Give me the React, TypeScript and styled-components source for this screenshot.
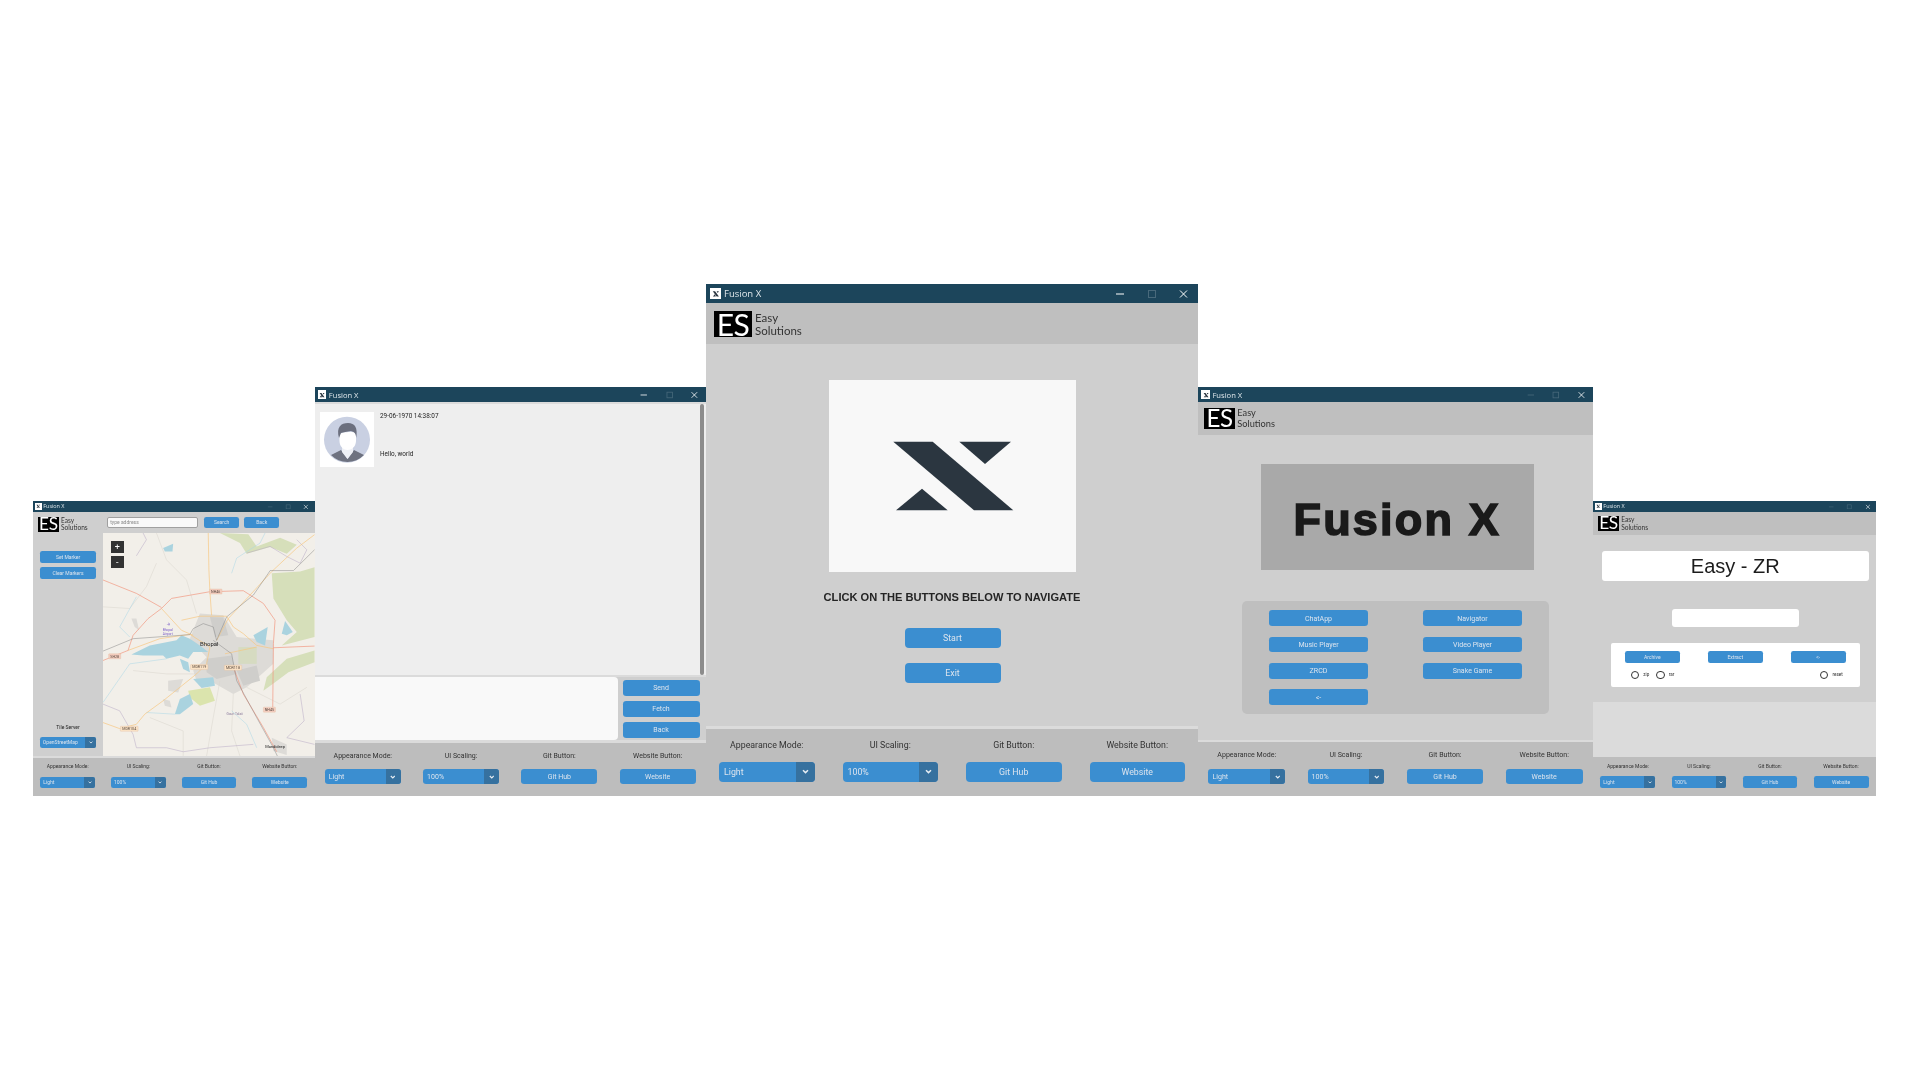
import React from "react";
import styled, { createGlobalStyle } from "styled-components";

const u = (n: number) => `calc(var(--s) * ${n}px)`;

const Global = createGlobalStyle`
  html, body { margin: 0; background: #fff; }
  body { font-family: Roboto, "Liberation Sans", sans-serif; }
`;

const Stage = styled.main`
  width: 1920px;
  height: 1080px;
  box-sizing: border-box;
  padding: 284px 0 0 33px;
  overflow: hidden;
`;
const Row = styled.div`
  display: flex;
  align-items: flex-end;
  height: 512px;
`;
const Win = styled.section<{ $w: number; $h: number; $s: number; $blur: number }>`
  --s: ${(p) => p.$s};
  width: ${(p) => p.$w}px;
  height: ${(p) => p.$h}px;
  display: flex;
  flex-direction: column;
  flex: none;
  background: #dbdbdb;
  color: #242424;
  filter: blur(${(p) => p.$blur}px);
`;
const Title = styled.header`
  height: ${u(19)};
  flex: none;
  background: #1c455b;
  display: flex;
  align-items: center;
  padding-left: ${u(4)};
  color: #dfe7eb;
  font-family: "Open Sans", sans-serif;
  font-size: ${u(9.5)};
`;
const TitleIcon = styled.span`
  width: ${u(11)};
  height: ${u(11)};
  background: #fff;
  margin-right: ${u(3)};
  display: flex;
  align-items: center;
  justify-content: center;
  svg { width: 70%; height: 70%; }
`;
const TitleText = styled.span`
  flex: 1;
`;
const Ctl = styled.svg<{ $dim?: boolean; $last?: boolean }>`
  width: ${(p) => u(p.$last ? 30 : 32)};
  height: ${u(10)};
  stroke: ${(p) => (p.$dim ? "#48697b" : "#ffffff")};
  fill: none;
  stroke-width: 1;
`;

const Head = styled.div`
  height: ${u(41)};
  flex: none;
  background: #bfbfbf;
  display: flex;
  align-items: center;
  padding-left: ${u(8)};
`;
const LogoWrap = styled.div`
  display: flex;
  align-items: center;
  gap: ${u(3)};
  flex: none;
`;
const LogoBox = styled.div`
  width: ${u(38)};
  height: ${u(26)};
  box-sizing: border-box;
  background: #000;
  color: #fff;
  font-family: Lato, sans-serif;
  font-weight: 400;
  font-size: ${u(30)};
  line-height: ${u(26)};
  letter-spacing: ${u(-0.5)};
  text-align: center;
`;
const LogoText = styled.div`
  font-family: Lato, sans-serif;
  font-size: ${u(11.5)};
  line-height: ${u(13)};
  color: #333;
`;

const Body = styled.div`
  flex: 1;
  min-height: 0;
  background: #cfcfcf;
  display: flex;
  flex-direction: column;
  align-items: center;
`;
const Foot = styled.footer`
  flex: none;
  margin-top: ${u(3)};
  height: ${u(67)};
  box-sizing: border-box;
  background: #bdbdbd;
  padding: ${u(10)} ${u(13)} 0;
  display: grid;
  grid-template-columns: repeat(4, 1fr);
  column-gap: ${u(28)};
`;
const FootCol = styled.div`
  display: flex;
  flex-direction: column;
  align-items: stretch;
  text-align: center;
  font-size: ${u(8.8)};
`;
const FootLabel = styled.div`
  height: ${u(23)};
  line-height: ${u(12)};
  color: #333;
`;
const Btn = styled.button<{ $w?: number; $h?: number }>`
  appearance: none;
  border: 0;
  padding: 0;
  margin: 0;
  width: ${(p) => (p.$w ? `${p.$w}px` : "100%")};
  height: ${(p) => (p.$h ? `${p.$h}px` : u(19.5))};
  background: #3b8ed0;
  color: #dce4ee;
  border-radius: ${u(4)};
  font-family: Roboto, sans-serif;
  font-size: ${u(8.8)};
  flex: none;
`;
const Combo = styled.div`
  height: ${u(19.5)};
  border-radius: ${u(4)};
  overflow: hidden;
  background: #3b8ed0;
  color: #dce4ee;
  display: flex;
  align-items: center;
  font-size: ${u(8.8)};
  text-align: left;
`;
const ComboText = styled.span`
  flex: 1;
  padding-left: ${u(5)};
  white-space: nowrap;
`;
const ComboArrow = styled.span`
  width: ${u(19)};
  height: 100%;
  background: #36719f;
  display: flex;
  align-items: center;
  justify-content: center;
  svg { width: ${u(7)}; height: ${u(5)}; }
`;

const Chevron = () => (
  <svg viewBox="0 0 7 5" fill="none" stroke="#e6edf3" strokeWidth="1.5"><path d="M1 1.2 3.5 3.6 6 1.2" /></svg>
);

const Select = ({ value }: { value: string }) => (
  <Combo>
    <ComboText>{value}</ComboText>
    <ComboArrow><Chevron /></ComboArrow>
  </Combo>
);

const TitleBar = ({ active }: { active?: boolean }) => (
  <Title>
    <TitleIcon>
      <svg viewBox="0 0 10 10"><path d="M1 1.5h3l5 7H6zM6 1.5h3L7.5 4zM3.6 5.5 5 8.5H1.2z" fill="#2b3640" /></svg>
    </TitleIcon>
    <TitleText>Fusion X</TitleText>
    <Ctl viewBox="0 0 32 10" $dim={!active}><path d="M12 5h8" /></Ctl>
    <Ctl viewBox="0 0 32 10" $dim><rect x="12.5" y="1.5" width="7" height="7" /></Ctl>
    <Ctl viewBox="0 0 30 10" $last><path d="M12 1.5 19 8.5M19 1.5 12 8.5" /></Ctl>
  </Title>
);

const Logo = () => (
  <LogoWrap>
    <LogoBox>ES</LogoBox>
    <LogoText>Easy<br />Solutions</LogoText>
  </LogoWrap>
);

const Footer = () => (
  <Foot>
    <FootCol><FootLabel>Appearance Mode:</FootLabel><Select value="Light" /></FootCol>
    <FootCol><FootLabel>UI Scaling:</FootLabel><Select value="100%" /></FootCol>
    <FootCol><FootLabel>Git Button:</FootLabel><Btn>Git Hub</Btn></FootCol>
    <FootCol><FootLabel>Website Button:</FootLabel><Btn>Website</Btn></FootCol>
  </Foot>
);

/* ---------- navigator window ---------- */
const NavBody = styled.div`
  flex: 1;
  min-height: 0;
  background: #cfcfcf;
  display: flex;
  flex-direction: column;
`;
const NavTop = styled.div`
  height: 21px;
  flex: none;
  padding: 5px 0 0 4.5px;
  box-sizing: border-box;
  display: flex;
  align-items: flex-start;
`;
const NavSearch = styled.div`
  display: flex;
  gap: 5px;
  margin-left: 19.5px;
`;
const AddressInput = styled.div`
  width: 91px;
  height: 11px;
  box-sizing: border-box;
  background: #f9f9f9;
  border: 1px solid #a0a0a0;
  border-radius: 2px;
  margin-right: 1px;
  color: #8a8a8a;
  font-size: 5px;
  line-height: 9px;
  padding-left: 2px;
`;
const NavMain = styled.div`
  flex: 1;
  min-height: 0;
  display: flex;
`;
const Side = styled.aside`
  width: 70px;
  flex: none;
  box-sizing: border-box;
  padding: 18px 7px 8px;
  display: flex;
  flex-direction: column;
  gap: 4px;
`;
const SideGap = styled.div`
  flex: 1;
`;
const SideLabel = styled.div`
  text-align: center;
  font-size: 5px;
  line-height: 6px;
  margin-bottom: 3px;
`;
const MapBox = styled.div`
  position: relative;
  flex: 1;
  min-width: 0;
  svg.map { display: block; width: 100%; height: 100%; }
`;
const ZoomBtn = styled.div<{ $top: number }>`
  position: absolute;
  left: 8px;
  top: ${(p) => p.$top}px;
  width: 12.5px;
  height: 12.5px;
  background: #333;
  color: #fff;
  text-align: center;
  font-size: 9px;
  line-height: 12px;
`;
const Shield = ({ x, y, w, t, red }: { x: number; y: number; w: number; t: string; red?: boolean }) => (
  <g>
    <rect x={x} y={y} width={w} height="15" rx="1.5" fill={red ? "#f4cdbf" : "#fbe3c6"} stroke="#e0b89a" strokeWidth="1" />
    <text x={x + w / 2} y={y + 11.5} fontSize="11" textAnchor="middle" fill="#5a4a40" fontFamily="Roboto">{t}</text>
  </g>
);
const MapDrawing = () => (
  <svg className="map" viewBox="10 10 633 665" preserveAspectRatio="none">
    <rect x="0" y="0" width="660" height="690" fill="#f2efe9" />
    <g fill="#d6dfba">
      <path d="M515 130 600 125 643 112V320L545 345 590 305 560 270 520 205Z" />
      <path d="M643 360 560 385 500 440 490 480 525 455 565 425 643 395Z" />
      <path d="M360 10 445 14 470 50 540 24 590 45 560 72 510 52 440 72 420 40Z" />
    </g>
    <g fill="#dddbd7">
      <path d="M270 325 300 250 370 255 410 320 520 330 520 400 440 470 400 490 330 450 290 450 280 420 320 380Z" />
      <path d="M205 450 250 445 235 485 205 480Z" />
      <path d="M190 505 210 510 215 530 195 525Z" />
      <path d="M95 265 110 265 118 300 105 290Z" />
      <path d="M515 620 560 640 560 672 520 660Z" />
    </g>
    <g fill="#cfcecb">
      <path d="M330 260 370 262 385 315 345 320Z" />
      <path d="M320 385 395 375 410 430 350 445 320 425Z" />
      <path d="M410 420 470 405 480 450 430 465Z" />
    </g>
    <path d="M415 350 470 350 470 400 415 400Z" fill="#d3dbb8" opacity=".7" />
    <path d="M265 480 330 470 345 510 300 525 270 500Z" fill="#dbe4ad" />
    <g fill="#aad3df">
      <path d="M95 372 150 345 230 330 245 315 270 325 300 345 325 365 280 365 265 385 240 375 200 385 190 375 130 375Z" />
      <path d="M240 385 265 395 270 425 250 415Z" />
      <path d="M190 55 220 42 218 65 195 65Z" />
      <path d="M460 315 503 290 495 345 470 335Z" />
      <path d="M545 310 555 272 578 305 560 315Z" />
      <path d="M240 505 270 490 280 520 240 550 225 550Z" />
      <path d="M280 445 340 440 345 465 305 472Z" />
    </g>
    <g fill="none" stroke="#d9d5cd" strokeWidth="1.5">
      <path d="M170 10 200 90 260 150 290 250" />
      <path d="M10 230 90 235 140 170 170 100" />
      <path d="M440 470 540 520 620 470" />
      <path d="M360 450 340 560 320 675" />
      <path d="M100 420 200 430 290 430" />
      <path d="M400 490 395 600 420 675" />
      <path d="M150 560 250 600 250 675" />
    </g>
    <g fill="none" stroke="#b7a8c4" strokeWidth="1.5">
      <path d="M110 78 140 30 130 10" />
      <path d="M10 520 60 540 100 610 110 650 200 650 250 662 330 650 460 640" />
      <path d="M590 30 620 60 600 100 560 80 510 50 440 70" />
      <path d="M600 490 612 570 560 620 643 640" />
    </g>
    <g fill="none" stroke="#a9d7e6" strokeWidth="1.5">
      <path d="M395 130 410 85 480 40 495 10" />
      <path d="M110 200 60 290 90 320" />
      <path d="M10 515 90 400 200 385" />
      <path d="M395 540 440 580 470 650" />
      <path d="M225 550 140 545" />
    </g>
    <g fill="none" stroke="#f7c67e" strokeWidth="2">
      <path d="M325 10 327 120 330 185 335 255" />
      <path d="M245 270 300 258 380 258 400 290 430 310 470 345 520 355" />
      <path d="M643 15 590 55 515 125 450 195 385 265 350 330" />
      <path d="M85 360 180 325 270 312 330 350" />
      <path d="M320 400 290 430 190 510 135 550 110 580 60 593 10 575" />
      <path d="M185 235 245 300 280 315" />
      <path d="M375 370 470 350" />
      <path d="M330 350 320 400" />
    </g>
    <g fill="none" stroke="#f2957c" strokeWidth="2">
      <path d="M10 390 85 360 100 315 145 265 185 235 215 205 330 185 430 182 490 220 525 270 520 340 518 530" />
      <path d="M10 150 30 158 110 190 185 232" />
      <path d="M520 352 643 347" />
      <path d="M400 410 430 490 490 590 530 662" />
    </g>
    <g fill="none" stroke="#868686" strokeWidth="1.5">
      <path d="M10 362 100 325 270 313 280 295 310 280 340 290 350 330 380 260 460 195 505 130 510 122 580 122 643 60" />
      <path d="M340 330 395 370 410 450 470 560 520 650 532 675" />
    </g>
    <Shield x={329} y={177} w={37} t="NH46" red />
    <Shield x={27} y={370} w={36} t="SH28" red />
    <Shield x={272} y={402} w={52} t="MDR119" />
    <Shield x={373} y={404} w={52} t="MDR118" />
    <Shield x={490} y={529} w={36} t="NH45" red />
    <Shield x={62} y={586} w={53} t="MDR104" />
    <text x="328" y="348" fontSize="18" textAnchor="middle" fill="#222" fontFamily="Roboto">Bhopal</text>
    <path d="M205 276 209 286 200 283 211 282Z" fill="#7b5fc9" />
    <text x="204" y="301" fontSize="10" textAnchor="middle" fill="#7b5fc9" fontFamily="Roboto">Bhopal</text>
    <text x="204" y="314" fontSize="10" textAnchor="middle" fill="#7b5fc9" fontFamily="Roboto">Airport</text>
    <text x="404" y="551" fontSize="10" textAnchor="middle" fill="#8a7a9a" fontFamily="Roboto">Goun Talaii</text>
    <text x="525" y="650" fontSize="12" textAnchor="middle" fill="#222" fontFamily="Roboto">Mandideep</text>
  </svg>
);

const NavigatorWindow = () => (
  <Win $w={281.5} $h={295} $s={0.572} $blur={0.55}>
    <TitleBar />
    <NavBody>
      <NavTop>
        <Logo />
        <NavSearch>
          <AddressInput>type address</AddressInput>
          <Btn $w={35} $h={11}>Search</Btn>
          <Btn $w={35} $h={11}>Back</Btn>
        </NavSearch>
      </NavTop>
      <NavMain>
        <Side>
          <Btn $h={12}>Set Marker</Btn>
          <Btn $h={12}>Clear Markers</Btn>
          <SideGap />
          <SideLabel>Tile Server</SideLabel>
          <Select value="OpenStreetMap" />
        </Side>
        <MapBox>
          <MapDrawing />
          <ZoomBtn $top={8}>+</ZoomBtn>
          <ZoomBtn $top={23}>-</ZoomBtn>
        </MapBox>
      </NavMain>
    </NavBody>
    <Footer />
  </Win>
);

/* ---------- chat window ---------- */
const ChatWrap = styled.div`
  flex: 1;
  min-height: 0;
  margin-top: 2px;
  display: flex;
  flex-direction: column;
`;
const ChatList = styled.div`
  flex: 1;
  min-height: 0;
  display: flex;
  background: #eeeeee;
`;
const ChatMsgs = styled.div`
  flex: 1;
  padding: 8px 0 0 5.5px;
  display: flex;
  align-items: flex-start;
  gap: 6px;
`;
const Scroll = styled.div`
  width: 4px;
  margin: 0 2px;
  background: #8c8c8c;
  border-radius: 2px;
`;
const Avatar = styled.div`
  width: 54px;
  height: 55px;
  background: #fff;
  flex: none;
  svg { display: block; width: 100%; height: 100%; }
`;
const MsgCol = styled.div`
  font-size: 6.4px;
  line-height: 8px;
`;
const MsgBody = styled.div`
  margin-top: 30px;
`;
const Composer = styled.div`
  height: 63px;
  flex: none;
  margin-top: 2px;
  display: flex;
  background: #cfcfcf;
`;
const ComposeInput = styled.div`
  width: 303px;
  background: #f9f9f9;
  border-radius: 0 4px 4px 0;
`;
const ComposeBtns = styled.div`
  width: 77px;
  margin-left: 5px;
  padding-top: 3px;
  display: flex;
  flex-direction: column;
  gap: 5.5px;
`;

const ChatWindow = () => (
  <Win $w={391.5} $h={409} $s={0.797} $blur={0.45}>
    <TitleBar active />
    <ChatWrap>
      <ChatList>
        <ChatMsgs>
          <Avatar>
            <svg viewBox="0 0 54 55">
              <circle cx="27" cy="27.7" r="23" fill="#c9d0e2" />
              <path d="M11 43 21 38 27.5 47 34 38 44 43A23 23 0 0 1 11 43Z" fill="#6e7280" />
              <path d="M22 33H33V40L27.5 47 22 40Z" fill="#eef0f6" />
              <path d="M19.5 22C22 20 33 19 36 21V29C36 35 31 38 27.5 38 24 38 19.5 35 19.5 29Z" fill="#ffffff" />
              <path d="M19 26C16 15 21 11 28 11 35 11 38 16 36.2 26 36 21 34 20 31 19 27 20 23 20 21 21Z" fill="#6b6f7e" />
            </svg>
          </Avatar>
          <MsgCol>
            <div>29-06-1970 14:38:07</div>
            <MsgBody>Hello, world</MsgBody>
          </MsgCol>
        </ChatMsgs>
        <Scroll />
      </ChatList>
      <Composer>
        <ComposeInput />
        <ComposeBtns>
          <Btn $h={15.5}>Send</Btn>
          <Btn $h={15.5}>Fetch</Btn>
          <Btn $h={15.5}>Back</Btn>
        </ComposeBtns>
      </Composer>
    </ChatWrap>
    <Footer />
  </Win>
);

/* ---------- main window ---------- */
const Splash = styled.div`
  width: 247px;
  height: 192px;
  margin-top: 36px;
  background: #f8f8f8;
  svg { display: block; width: 100%; height: 100%; }
`;
const Prompt = styled.h2`
  margin: 18px 0 0;
  font: bold 11.1px/14px "Liberation Sans", sans-serif;
  color: #242424;
`;
const SplashBtns = styled.div`
  margin: 24px 0 0 1px;
  display: flex;
  flex-direction: column;
  gap: 15px;
`;

const MainWindow = () => (
  <Win $w={492} $h={512} $s={1} $blur={0.4}>
    <TitleBar active />
    <Head><Logo /></Head>
    <Body>
      <Splash>
        <svg viewBox="0 0 247 192" fill="#2b3640">
          <path d="M64.3 61.7H103.7L184.3 130.3H145Z" />
          <path d="M130.3 61.7H182L156 84Z" />
          <path d="M93 108.7 118.7 130.3H67Z" />
        </svg>
      </Splash>
      <Prompt>CLICK ON THE BUTTONS BELOW TO NAVIGATE</Prompt>
      <SplashBtns>
        <Btn $w={96} $h={20}>Start</Btn>
        <Btn $w={96} $h={20}>Exit</Btn>
      </SplashBtns>
    </Body>
    <Footer />
  </Win>
);

/* ---------- launcher window ---------- */
const Banner = styled.div`
  width: 273px;
  height: 106px;
  box-sizing: border-box;
  padding-top: 5px;
  margin: 29px 0 0 3.5px;
  background: #a9a9a9;
  display: flex;
  align-items: center;
  justify-content: center;
  font: bold 45px "Liberation Sans", sans-serif;
  letter-spacing: 2.2px;
  -webkit-text-stroke: 1.6px #1a1a1a;
  color: #1a1a1a;
`;
const AppGrid = styled.div`
  width: 307px;
  height: 113px;
  box-sizing: border-box;
  margin-top: 31px;
  padding: 9px 27px;
  background: #bfbfbf;
  border-radius: 5px;
  display: grid;
  grid-template-columns: 99px 99px;
  justify-content: space-between;
  grid-auto-rows: 16px;
  row-gap: 10.4px;
`;

const LauncherWindow = () => (
  <Win $w={395} $h={409} $s={0.803} $blur={0.45}>
    <TitleBar />
    <Head><Logo /></Head>
    <Body>
      <Banner>Fusion X</Banner>
      <AppGrid>
        <Btn>ChatApp</Btn>
        <Btn>Navigator</Btn>
        <Btn>Music Player</Btn>
        <Btn>Video Player</Btn>
        <Btn>ZRCD</Btn>
        <Btn>Snake Game</Btn>
        <Btn>&lt;-</Btn>
      </AppGrid>
    </Body>
    <Footer />
  </Win>
);

/* ---------- archive window ---------- */
const ZrBody = styled.div`
  height: 167px;
  flex: none;
  box-sizing: border-box;
  padding-left: 1.5px;
  background: #cfcfcf;
  display: flex;
  flex-direction: column;
  align-items: center;
`;
const ZrSpacer = styled.div`
  flex: 1;
  background: #dbdbdb;
`;
const ZrTitle = styled.div`
  width: 267px;
  height: 30px;
  margin-top: 16px;
  background: #fff;
  border-radius: 3px;
  text-align: center;
  font: 20px/30px "Liberation Sans", sans-serif;
  color: #1c1c1c;
`;
const ZrEntry = styled.div`
  width: 127px;
  height: 18px;
  margin-top: 28px;
  background: #fff;
  border-radius: 3px;
`;
const ZrPanel = styled.div`
  width: 249px;
  height: 44px;
  box-sizing: border-box;
  margin-top: 16px;
  padding: 8px 14px 0;
  background: #fff;
  border-radius: 2px;
  display: grid;
  grid-template-columns: 55px 55px 55px;
  justify-content: space-between;
  grid-template-rows: 11px 1fr;
`;
const RadioCell = styled.div<{ $end?: boolean }>`
  display: flex;
  align-items: center;
  gap: 4px;
  padding-top: 0;
  justify-content: ${(p) => (p.$end ? "flex-end" : "flex-start")};
  padding-left: ${(p) => (p.$end ? 0 : 6)}px;
  padding-right: ${(p) => (p.$end ? 3 : 0)}px;
  font-size: 4.6px;
  color: #333;
`;
const RadioDot = styled.i`
  width: 8.5px;
  height: 8.5px;
  box-sizing: border-box;
  border: 1px solid #333;
  border-radius: 50%;
  flex: none;
`;
const RadioLabel = styled.span`
  margin-right: 3px;
`;

const ArchiveWindow = () => (
  <Win $w={283} $h={295} $s={0.575} $blur={0.55}>
    <TitleBar />
    <Head><Logo /></Head>
    <ZrBody>
      <ZrTitle>Easy - ZR</ZrTitle>
      <ZrEntry />
      <ZrPanel>
        <Btn>Archive</Btn>
        <Btn>Extract</Btn>
        <Btn>&lt;-</Btn>
        <RadioCell>
          <RadioDot /><RadioLabel>zip</RadioLabel>
          <RadioDot /><RadioLabel>rar</RadioLabel>
        </RadioCell>
        <span />
        <RadioCell $end>
          <RadioDot /><span>reset</span>
        </RadioCell>
      </ZrPanel>
    </ZrBody>
    <ZrSpacer />
    <Footer />
  </Win>
);

export default function App() {
  return (
    <>
      <Global />
      <Stage>
        <Row>
          <NavigatorWindow />
          <ChatWindow />
          <MainWindow />
          <LauncherWindow />
          <ArchiveWindow />
        </Row>
      </Stage>
    </>
  );
}
